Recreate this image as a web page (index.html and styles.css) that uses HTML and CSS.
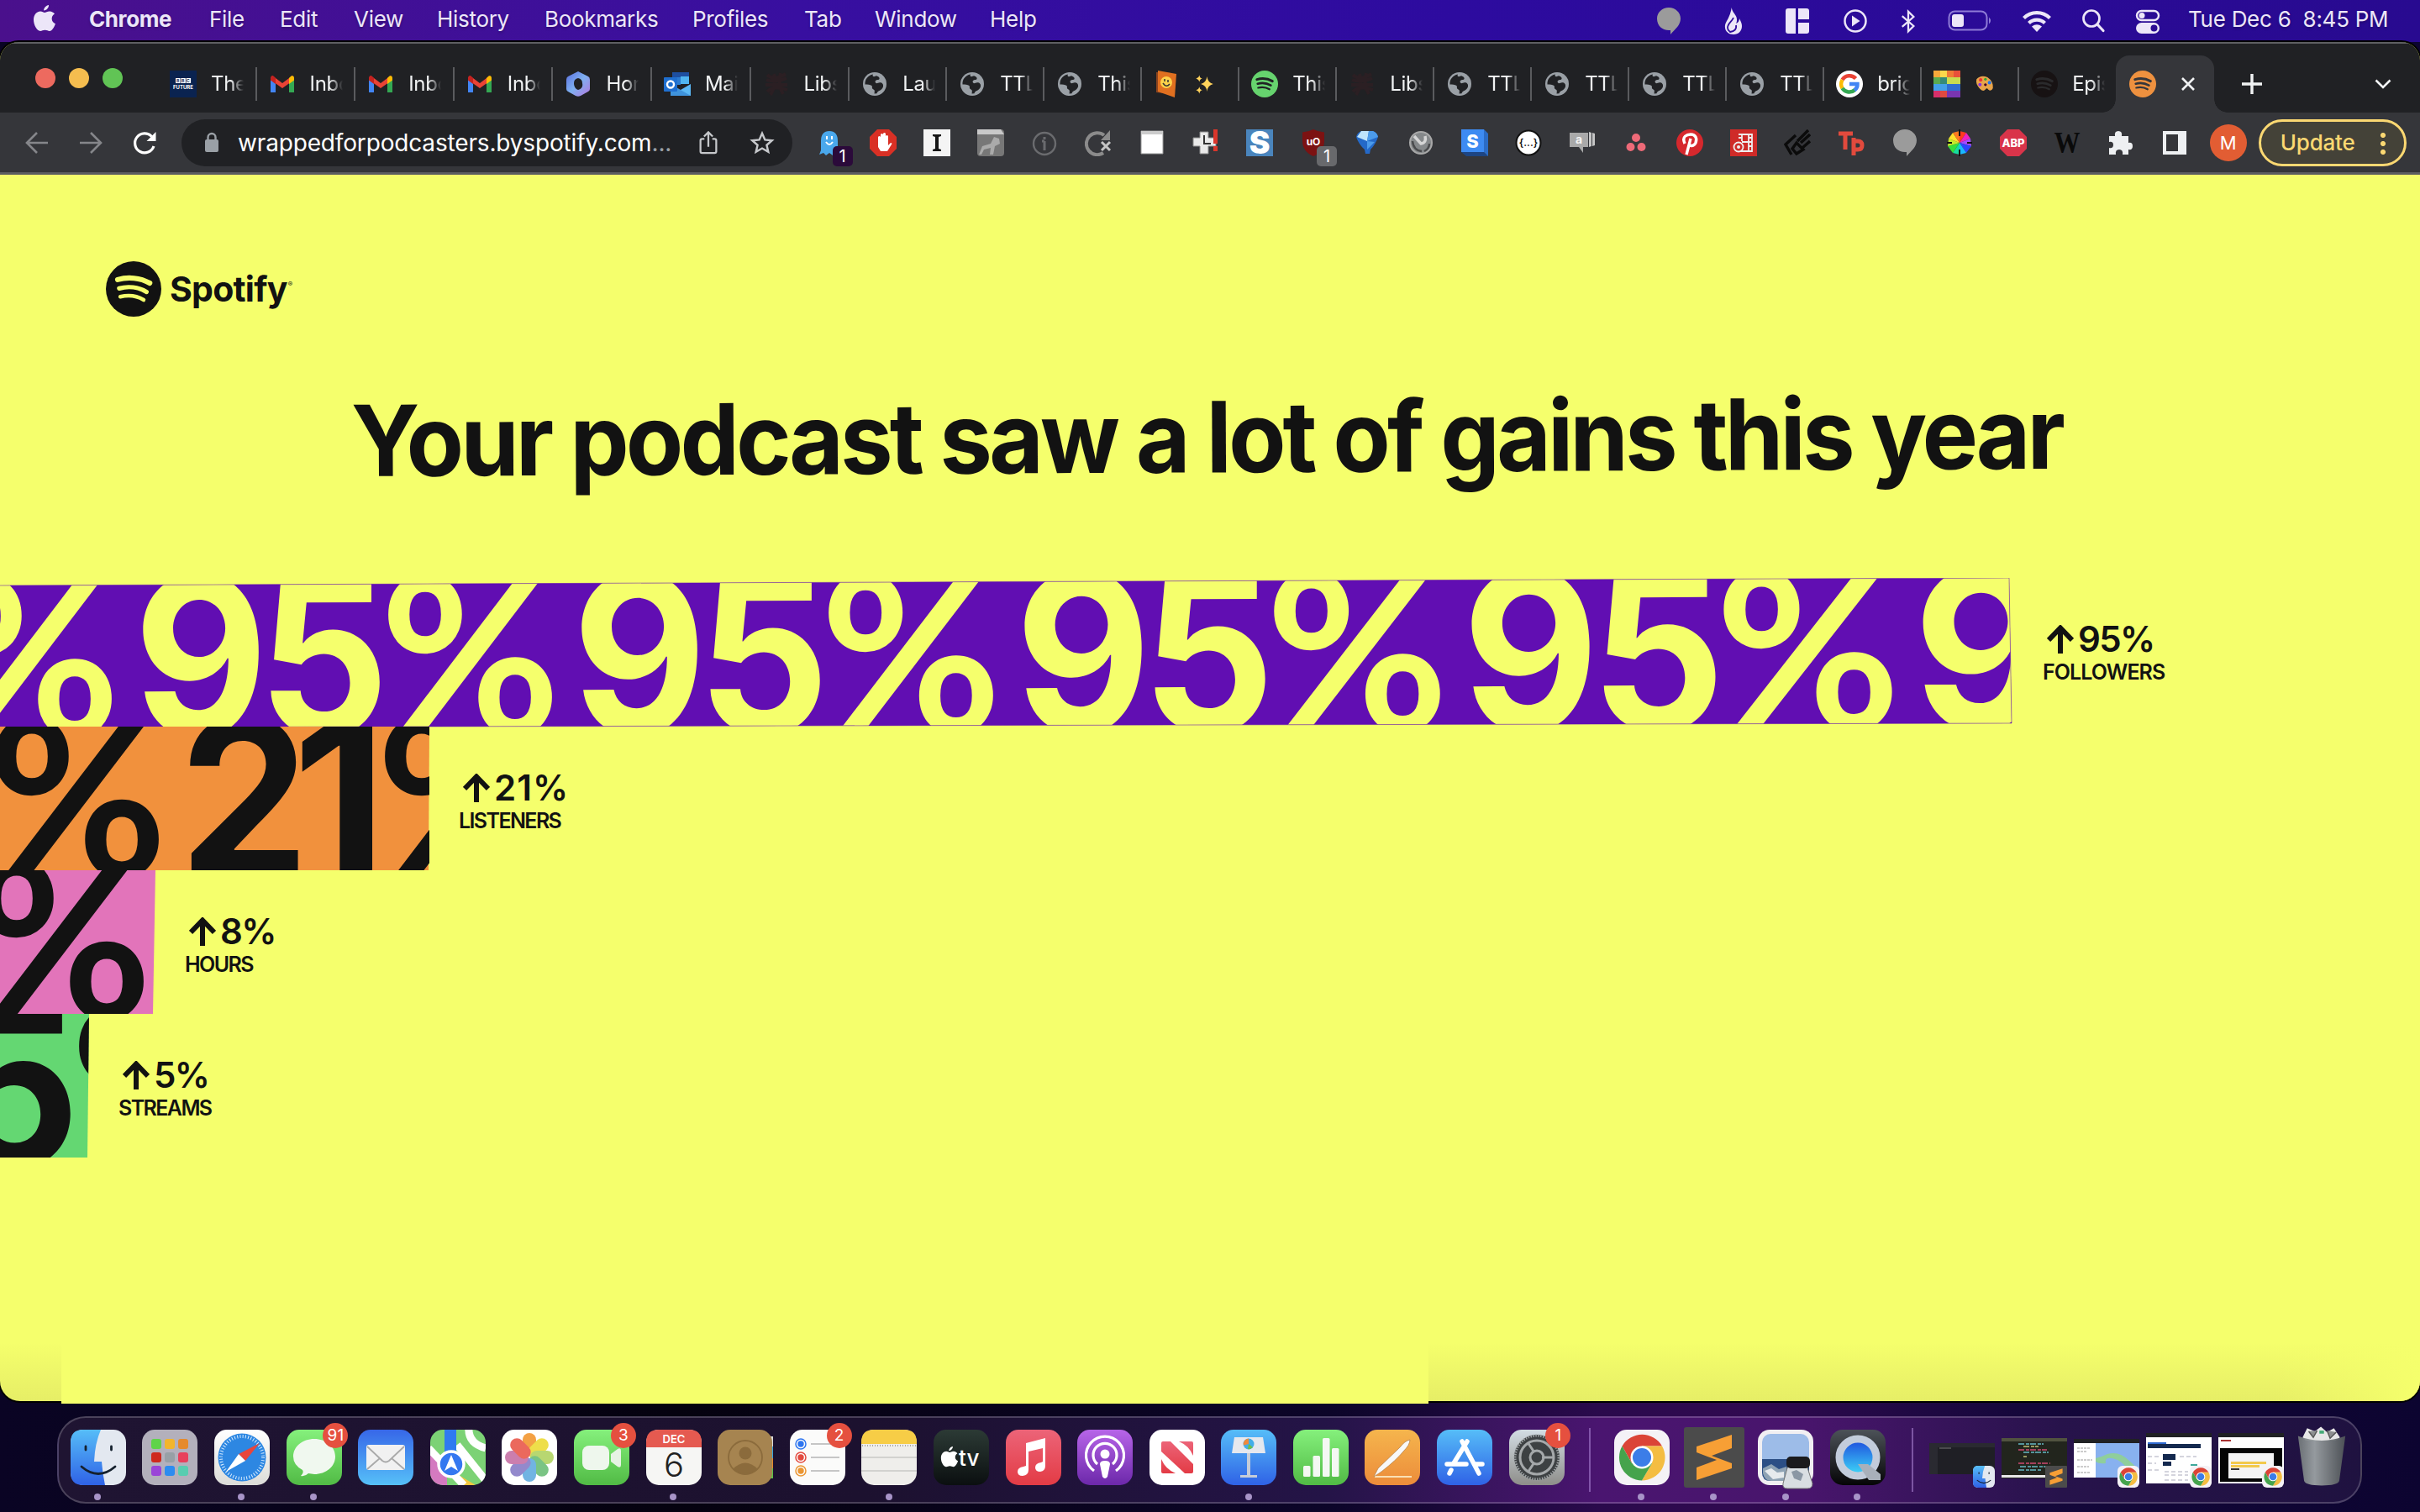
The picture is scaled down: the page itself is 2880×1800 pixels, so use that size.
FILE: index.html
```html
<!DOCTYPE html>
<html lang="en">
<head>
<meta charset="utf-8">
<title>Wrapped for Podcasters</title>
<link rel="stylesheet" href="styles.css">
</head>
<body>
<svg class="sprite" width="0" height="0" aria-hidden="true">
<defs>
<linearGradient id="gBlue" x2="0" y2="1"><stop stop-color="#3767e8"/><stop offset="1" stop-color="#56c0f8"/></linearGradient>
<linearGradient id="gBlue2" x2="0" y2="1"><stop stop-color="#56bdf8"/><stop offset="1" stop-color="#2f62e6"/></linearGradient>
<linearGradient id="gGreen" x2="0" y2="1"><stop stop-color="#85f07c"/><stop offset="1" stop-color="#51bb45"/></linearGradient>
<linearGradient id="gWhite" x2="0" y2="1"><stop stop-color="#fff"/><stop offset="1" stop-color="#dcdcd8"/></linearGradient>
<linearGradient id="gPurple" x2="0" y2="1"><stop stop-color="#b765e8"/><stop offset="1" stop-color="#6c28aa"/></linearGradient>
<linearGradient id="gRed" x2="0" y2="1"><stop stop-color="#ec6478"/><stop offset="1" stop-color="#e33b45"/></linearGradient>
<linearGradient id="gOrange" x2="0" y2="1"><stop stop-color="#f5b54d"/><stop offset="1" stop-color="#ec8c3a"/></linearGradient>
<linearGradient id="gTv" x2="0" y2="1"><stop stop-color="#2c3a35"/><stop offset="1" stop-color="#0b0f10"/></linearGradient>
<linearGradient id="gGray" x2="0" y2="1"><stop stop-color="#d3dde4"/><stop offset="1" stop-color="#8e8e8a"/></linearGradient>
<linearGradient id="gDark" x2="0" y2="1"><stop stop-color="#4c5258"/><stop offset="1" stop-color="#050506"/></linearGradient>
<linearGradient id="gBin" x2="1"><stop stop-color="#6e7477"/><stop offset=".35" stop-color="#9ba1a3"/><stop offset="1" stop-color="#4f5457"/></linearGradient>
<linearGradient id="gHex" x2="1" y2="1"><stop stop-color="#5a6fe0"/><stop offset=".5" stop-color="#7fb0f0"/><stop offset="1" stop-color="#b478e0"/></linearGradient>
<linearGradient id="gQt" x2="0" y2="1"><stop stop-color="#1d49dd"/><stop offset="1" stop-color="#3fdcf8"/></linearGradient>

<symbol id="apple" viewBox="0 0 28 32"><path fill="currentColor" d="M19 0c.3 3-2.600 6.500-5.800 6.400C12.900 3.500 16 .3 19 0zM14 9c1.500 0 3.300-1.700 6.300-1.600 2.200.1 4.400 1.200 5.700 3.200-5 3-4.100 9.700.9 11.600C25.700 26 22.900 30.900 20 31c-2 0-2.900-1.200-5.500-1.200S11 31 9 31C5 31 1 23.700 1 17.600 1 11 5.300 7.500 9 7.500c2.200 0 4 1.500 5 1.500z"/></symbol>
<symbol id="spot" viewBox="0 0 32 32"><circle cx="16" cy="16" r="16" fill="currentColor"/><g fill="none" stroke="var(--cut,#202124)" stroke-linecap="round"><path stroke-width="3" d="M6.800 10.600c6-1.700 13-1.100 18.500 2"/><path stroke-width="2.600" d="M7.700 15.700c5-1.400 11-.8 15.700 2"/><path stroke-width="2.200" d="M8.300 20.500c4.500-1.100 9.500-.6 13.500 1.800"/></g></symbol>
<symbol id="globe" viewBox="0 0 32 32"><circle cx="16" cy="16" r="14" fill="#9aa0a6"/><path fill="#202124" d="M14 4.500c-6 1-10 6-9.500 12 3 0 6 0 8 1.500 1 2-.5 3 2 4.500 1.500.5 1.500 2 1 5l3-.2c1-4 6-3 7.500-8 .5-3-1-5-4-5l-4 1c-2-1-2-3 0-4l3-.5c2-2-1-4-3-4.500l-3 1c-2-.5-1.500-2-1-2.800z"/></symbol>
<symbol id="gmail" viewBox="0 0 32 32"><path fill="#4285f4" d="M2 8v18h6V13z"/><path fill="#34a853" d="M30 8v18h-6V13z"/><path fill="#ea4335" d="M4 6l12 9 12-9 2 5-14 10L2 11z"/><path fill="#fbbc04" d="M24 9l2.500-2.500Q30 5 30 9.500v2l-6 4.400z"/><path fill="#c5221f" d="M8 9L5.500 6.500Q2 5 2 9.500v2l6 4.400z"/></symbol>
<symbol id="bbc" viewBox="0 0 32 32"><path fill="#0a2350" d="M0 0h32v32H0z"/><g font-family="Inter" font-weight="700" text-anchor="middle"><path fill="#fff" d="M7 9h5.500v6H7zM13.300 9h5.500v6h-5.500zM19.600 9h5.500v6h-5.500z"/><text x="17.200" y="14" font-size="5" fill="#0a2350" letter-spacing="2.700">BBC</text><text x="16" y="21.500" font-size="6" fill="#fff">FUTURE</text></g></symbol>
<symbol id="m365" viewBox="0 0 32 32"><path fill="url(#gHex)" fill-rule="evenodd" d="M16 1l12 6q2 1 2 4v11q0 2-2 3l-9 5q-3 1.500-6 0l-9-5q-2-1-2-3V11q0-3 2-4zM16 9q-5 1-5 6c0 4 2 7 5 8 4-1 6-4 5-8q0-5-5-6z"/></symbol>
<symbol id="outlook" viewBox="0 0 32 32"><path fill="#1e4fa0" d="M10 2h20v14H10z"/><path fill="#50b5f0" d="M20 7h10v9H20z"/><path fill="#2b7bd0" d="M10 8h10v9H10z"/><path fill="#5bb8f5" d="M8 30h24V16z"/><path fill="#3f93dc" d="M8 16v14h24z"/><rect y="8" width="16" height="17" rx="1" fill="#1f6fd0"/><circle cx="8" cy="16.500" r="4" fill="none" stroke="#fff" stroke-width="2.400"/></symbol>
<symbol id="blot" viewBox="0 0 32 32"><path fill="none" stroke="#2b1f23" stroke-width="4" d="M5 5q8 8 22-1M4 11q10 4 24-2M3 17h26M5 25q8-8 24-2M13 4q4 12-4 25M21 3q-4 14 3 25"/></symbol>
<symbol id="book" viewBox="0 0 32 32"><path fill="#8a4420" d="M3 2l18 1v25L3 26z"/><path fill="#e07020" d="M5 0l22 4-2 28-20-7z"/><circle cx="15" cy="14" r="7" fill="#ffd24a"/><path stroke="#333" stroke-width="1.500" fill="none" d="M11 15q4 6 8 1M13 10v3m4-2v3"/></symbol>
<symbol id="sparkles" viewBox="0 0 32 32"><path fill="#ffd35c" d="M19 5q1 9 9 11-8 2-9 11-1-9-9-11 8-2 9-11zM8 3q0 4 4 5-4 1-4 5-1-4-5-5 4-1 5-5zM8 20q0 4 4 5-4 1-4 5-1-4-5-5 4-1 5-5z"/></symbol>
<symbol id="google" viewBox="0 0 32 32"><circle cx="16" cy="16" r="16" fill="#fff"/><g fill="none" stroke-width="4.500"><path stroke="#ea4335" d="M7.500 11A10 10 0 0 1 23.500 9.500"/><path stroke="#fbbc04" d="M7.500 21A10 10 0 0 1 7.500 11"/><path stroke="#34a853" d="M7.500 21A10 10 0 0 0 22.500 23"/><path stroke="#4285f4" d="M16 16h9.500a9 9 0 0 1-3.500 7.500"/></g></symbol>
<symbol id="mosaic" viewBox="0 0 32 32"><path fill="#f7a83b" d="M0 0h8v8H0z"/><path fill="#fbd84c" d="M8 0h8v8H8z"/><path fill="#ef7a35" d="M16 0h8v8h-8z"/><path fill="#e8503a" d="M24 0h8v8h-8z"/><path fill="#5aaa50" d="M0 8h8v8H0z"/><path fill="#368a78" d="M8 8h8v8H8z"/><path fill="#c8dc50" d="M16 8h16v8H16z"/><path fill="#43a0e8" d="M0 16h16v8H0z"/><path fill="#2f6ed0" d="M16 16h16v8H16z"/><path fill="#d62f6a" d="M0 24h8v8H0z"/><path fill="#e04a40" d="M8 24h8v8H8z"/><path fill="#7a35b0" d="M16 24h16v8H16z"/></symbol>
<symbol id="palette" viewBox="0 0 32 32"><path fill="#e8a44a" d="M4 9Q10 2 20 6q9 6 8 16-3 6-7 2-2-3-4 0-3 4-8-1Q2 16 4 9z"/><circle cx="10" cy="10" r="2.500" fill="#e33"/><circle cx="17" cy="9" r="2" fill="#3a3"/><circle cx="9" cy="17" r="2.500" fill="#83d"/><circle cx="23" cy="14" r="2.500" fill="#27e"/><circle cx="17" cy="17" r="2" fill="#402"/></symbol>

<symbol id="bubble" viewBox="0 0 32 32"><path fill="#9b9b9b" d="M16 0c8 0 14 6 14 13 0 8-6 12-12 19v-5C9 28 2 22 2 13 2 6 8 0 16 0z"/></symbol>
<symbol id="flame" viewBox="0 0 32 32"><path fill="currentColor" d="M15-1c-1 6 6 9 6 15 0 2 0 3-1 5 3-1 4-4 4-6 2 4 3 6 3 9 0 6-4 10-10 10S6 28 7 21c.5-4 6-9 8-22z"/><path fill="none" stroke="#2e0b9c" stroke-width="1.800" d="M17 12c-2 5-7 7-7 12 0 3 2 4 3 5 5-1 8-3 7-8"/></symbol>
<symbol id="layout" viewBox="0 0 32 32"><path fill="currentColor" d="M5 1h9v30H5q-3 0-3-3V4q0-3 3-3zM17 1h10q3 0 3 3v10H17zM17 18h13v10q0 3-3 3H17z"/></symbol>
<symbol id="play" viewBox="0 0 32 32"><circle cx="16" cy="16" r="12.500" fill="none" stroke="currentColor" stroke-width="2.500"/><path fill="currentColor" d="M12 9.500v13l9.500-6.500z"/></symbol>
<symbol id="bt" viewBox="0 0 32 32"><path fill="none" stroke="currentColor" stroke-width="2.500" d="M8 9l15 13-7 7V3l7 7L8 23"/></symbol>
<symbol id="battery" viewBox="0 0 54 28"><rect x="1.500" y="2.500" width="45" height="22" rx="7" fill="none" stroke="#8e7bd6" stroke-width="2"/><rect x="5" y="6" width="14" height="15" rx="3" fill="currentColor"/><path fill="#8e7bd6" d="M49 9.500q4 4 0 8z"/></symbol>
<symbol id="wifi" viewBox="0 0 36 28"><g fill="none" stroke="currentColor" stroke-width="4.200"><path d="M2.500 10.500a22 22 0 0 1 31 0M8.500 16.500a13.500 13.500 0 0 1 19 0"/></g><path fill="currentColor" d="M18 27l-6-6.500q6-4.500 12 0z"/></symbol>
<symbol id="search" viewBox="0 0 32 32"><circle cx="14" cy="13" r="9.500" fill="none" stroke="currentColor" stroke-width="2.700"/><path stroke="currentColor" stroke-width="3.200" stroke-linecap="round" d="M21 20l7 7.500"/></symbol>
<symbol id="control" viewBox="0 0 32 32"><rect x="3" y="4" width="26" height="11" rx="5.500" fill="none" stroke="currentColor" stroke-width="2.400"/><circle cx="9" cy="9.500" r="3.500" fill="currentColor"/><rect x="2" y="18" width="28" height="13" rx="6.500" fill="currentColor"/><circle cx="23.500" cy="24.500" r="4" fill="#2a0a93"/></symbol>

<symbol id="back" viewBox="0 0 32 32"><path fill="none" stroke="currentColor" stroke-width="2.600" d="M29 16H4M16 4L4 16l12 12"/></symbol>
<symbol id="fwd" viewBox="0 0 32 32"><path fill="none" stroke="currentColor" stroke-width="2.600" d="M3 16h25M16 4l12 12-12 12"/></symbol>
<symbol id="reload" viewBox="0 0 32 32"><path fill="none" stroke="currentColor" stroke-width="3.200" d="M27 20a11.500 11.500 0 1 1-2.500-11.500"/><path fill="currentColor" d="M29.500 3v11H18.500z"/></symbol>
<symbol id="lock" viewBox="0 0 20 26"><rect x="2" y="9" width="16" height="15" rx="2" fill="#9aa0a6"/><path fill="none" stroke="#9aa0a6" stroke-width="2.400" d="M5.500 10V6.500a4.500 4.500 0 0 1 9 0V10"/></symbol>
<symbol id="share" viewBox="0 0 32 32"><g fill="none" stroke="currentColor" stroke-width="2.400"><path d="M11 11H8q-2 0-2 2v14q0 2 2 2h16q2 0 2-2V13q0-2-2-2h-3M16 21V3M10.500 8L16 2.500 21.500 8"/></g></symbol>
<symbol id="star" viewBox="0 0 32 32"><path fill="none" stroke="currentColor" stroke-width="2.600" d="M16 4l3.600 8.200 8.900.8-6.700 5.900 2 8.700L16 23l-7.800 4.600 2-8.700L3.500 13l8.900-.8z"/></symbol>

<symbol id="x1" viewBox="0 0 32 32"><path fill="#4aa8ec" d="M16 2q10 0 10 12v12l2 4-5-2-3 3-4-3-4 3-3-3-5 2 2-5V14Q6 2 16 2z"/><path fill="none" stroke="#fff" stroke-width="2" d="M12 15q4 6 8 0M13 8v4m6-4v4"/></symbol>
<symbol id="x2" viewBox="0 0 32 32"><path fill="#d93025" d="M9 0h14l9 9v14l-9 9H9l-9-9V9z"/><path fill="#fff" d="M10 17V9q1.500-2 3 0v5-8q1.500-2 3 0v8-9q1.500-2 3 0v10-7q1.500-2 3 0v11l3-3q2 0 1 2l-5 8h-8l-3-5z"/></symbol>
<symbol id="x3" viewBox="0 0 32 32"><path fill="#f4f4f4" d="M0 0h32v32H0z"/><path fill="#161616" d="M11 6h10v2l-3 1v14l3 1v2H11v-2l3-1V9l-3-1z"/></symbol>
<symbol id="x4" viewBox="0 0 32 32"><rect width="32" height="32" rx="4" fill="#777"/><path fill="#c9c9c9" d="M0 0h28l4 6H0z"/><path fill="#aaa" d="M20 9l6 2 1 6-6 3-2 10h-4l1-8-8 2-3 6H2l4-10 10-3z"/></symbol>
<symbol id="x5" viewBox="0 0 32 32"><circle cx="16" cy="17" r="13" fill="none" stroke="#6a6b6e" stroke-width="2.400"/><path stroke="#6a6b6e" stroke-width="3" d="M16 14v11m0-16v3m-3 2h3"/></symbol>
<symbol id="x6" viewBox="0 0 32 32"><path fill="none" stroke="#8b8b8b" stroke-width="4" d="M23 7a13 13 0 1 0-1 21"/><path fill="#8b8b8b" d="M30 1v12H19z"/><path stroke="#c4c4c4" stroke-width="3" d="M20 15l10 10m0-10L20 25"/></symbol>
<symbol id="x7" viewBox="0 0 32 32"><path fill="#fff" stroke="#999" d="M3 2h26v27H3z"/><path fill="#ccc" d="M3 2h26v4H3z"/></symbol>
<symbol id="x8" viewBox="0 0 32 32"><path fill="#e9e9e9" stroke="#888" d="M9 3h10v7h9v10h-9v9H9v-9H1V10h8z"/><path fill="none" stroke="#333" stroke-width="2" d="M14 7v10h8"/><path stroke="#d9362b" stroke-width="5" d="M27.500 0v17m0 3v6"/></symbol>
<symbol id="x9" viewBox="0 0 32 32"><path fill="#4a85bd" d="M0 0h32v32H0z"/><text x="16" y="29" font-family="Inter" font-weight="900" font-size="37" text-anchor="middle" fill="#fff">S</text></symbol>
<symbol id="x10" viewBox="0 0 32 32"><path fill="#7c1212" d="M16 0q6 3 13 3.500V14q0 12-13 18Q3 26 3 14V3.500Q10 3 16 0z"/><text x="16" y="19" font-family="Inter" font-weight="700" font-size="12" text-anchor="middle" fill="#fff">uO</text></symbol>
<symbol id="x11" viewBox="0 0 32 32"><path fill="#2469c8" d="M9 2h14q5 2 6 7-3 9-9 15l-1 5h-5l-1-5Q6 18 3 9q1-5 6-7z"/><path fill="#bfe4fb" d="M9 2h9l-2 12L4 9z"/><path fill="#4c9bea" d="M18 2h5q5 2 6 7l-13 5zM16 14l9 1-9 9z"/></symbol>
<symbol id="x12" viewBox="0 0 32 32"><circle cx="16" cy="16" r="13" fill="#85888a" stroke="#a8a8a8" stroke-width="2"/><path fill="none" stroke="#d5d5d5" stroke-width="3.500" d="M8 8l8 9q7-1 5-9"/><path fill="none" stroke="#4a4b4d" stroke-width="2.500" d="M6 14q1 11 11 12M20 26q6-3 6-9"/></symbol>
<symbol id="x13" viewBox="0 0 32 32"><path fill="#1d4583" d="M0 27h27l5 5H6z"/><path fill="#2b6cc6" d="M27 0l5 5v27l-5-5z"/><path fill="#3d8bf2" d="M0 0h27v27H0z"/><text x="13.500" y="21.500" font-family="Inter" font-weight="800" font-size="22" text-anchor="middle" fill="#fff">S</text></symbol>
<symbol id="x14" viewBox="0 0 32 32"><circle cx="16" cy="16" r="14.500" fill="#fff" stroke="#111" stroke-width="2"/><text x="16" y="20" font-family="Inter" font-weight="600" font-size="12" text-anchor="middle" fill="#111">{...}</text></symbol>
<symbol id="x15" viewBox="0 0 32 32"><path fill="#a9a9a9" d="M1 4h22v17h-6v7l-5-7H1z"/><path fill="#c6c6c6" d="M24 3l3 1v16l-3 1zM28 4l3 1v14l-3 1z"/><text x="12" y="17" font-family="Inter" font-weight="700" font-size="14" text-anchor="middle" fill="#f4f4f4">a</text></symbol>
<symbol id="x16" viewBox="0 0 32 32"><g fill="#ee6a78"><circle cx="16" cy="10" r="5"/><circle cx="9.500" cy="21" r="5"/><circle cx="22.500" cy="21" r="5"/></g></symbol>
<symbol id="x17" viewBox="0 0 32 32"><circle cx="16" cy="16" r="16" fill="#d6282d"/><path fill="none" stroke="#fff" stroke-width="3.400" d="M10 17c-4-9 3-11 7-11 6 0 8 5 6 10-2 4-7 5-8 1M17 11l-5 19"/></symbol>
<symbol id="x18" viewBox="0 0 32 32"><path fill="#cf2b28" d="M0 0h32v32H0z"/><g fill="none" stroke="#eee" stroke-width="1.800"><path d="M10 6h16v20H12M14 6v8m8-8v20M10 10h4m8 0h4m-4 5h4m-4 5h4m-12-5h8"/><circle cx="10" cy="21" r="5.500"/></g><circle cx="10" cy="21" r="2" fill="#eee"/></symbol>
<symbol id="x19" viewBox="0 0 32 32"><g fill="none" stroke="#0b0b0b" stroke-width="3.400"><path d="M14 7L2 18l7 12M10 23l5-7 8 8-8 5zM16 14L29 1M20 16L31 6M22 22l9-8"/></g></symbol>
<symbol id="x20" viewBox="0 0 32 32"><path fill="none" stroke="#e24a3d" stroke-width="5" d="M1 5h17M9 3v21M19 10v21M19 14h5q5 0 5 5t-5 5h-5"/></symbol>
<symbol id="x22" viewBox="0 0 32 32"><path fill="#ff3b1f" d="M16 16V2l8 2z"/><path fill="#ee22c0" d="M16 16l8-12 5 7z"/><path fill="#a24aff" d="M16 16l13-5 1 9z"/><path fill="#2b45ff" d="M16 16l14 4-6 8z"/><path fill="#19b8ff" d="M16 16l8 12-8 2z"/><path fill="#17dca0" d="M16 16v14l-8-2z"/><path fill="#35e03a" d="M16 16L8 28l-6-8z"/><path fill="#c6ec2a" d="M16 16L2 20l1-9z"/><path fill="#ffe02b" d="M16 16L3 11l5-7z"/><path fill="#ff7a1f" d="M16 16L8 4l8-2z"/><path stroke="#111" stroke-width="2" d="M16 0v8m0 16v8M1 16h6m18 0h6"/></symbol>
<symbol id="x23" viewBox="0 0 32 32"><path fill="#d9344a" d="M9 0h14l9 9v14l-9 9H9l-9-9V9z"/><text x="16" y="20.500" font-family="Inter" font-weight="800" font-size="13" text-anchor="middle" fill="#fff">ABP</text></symbol>
<symbol id="x24" viewBox="0 0 32 32"><text x="16" y="28" font-family="Liberation Serif" font-weight="700" font-size="36" text-anchor="middle" textLength="31" lengthAdjust="spacingAndGlyphs" fill="#0a0a0a">W</text></symbol>
<symbol id="x25" viewBox="0 0 32 32"><path fill="#eef0f2" d="M2 8h7q-1-6 4-6t4 6h8v8q5-1 5 4t-5 4v6h-7q1-6-4-6t-4 6H2v-8q5 1 5-3.500T2 15z"/></symbol>
<symbol id="x26" viewBox="0 0 32 32"><path fill="#eef0f2" d="M2 2h28v28H2zm4 4v20h14V6z" fill-rule="evenodd"/></symbol>

<symbol id="finder" viewBox="0 0 66 66"><rect width="66" height="66" rx="15" fill="#e3e8f0"/><path fill="url(#gBlue2)" d="M15 0h21q-7 16-8 38h9q1 14 4 28H15Q0 66 0 51V15Q0 0 15 0z"/><g fill="none" stroke="#15212e" stroke-width="2.800" stroke-linecap="round"><path d="M18 20v4M48.500 20v4M13 44q20 17 40 0"/></g></symbol>
<symbol id="launch" viewBox="0 0 66 66"><rect width="66" height="66" rx="15" fill="#b3b0bc"/><g><rect x="11" y="11" width="12" height="12" rx="3" fill="#5fd44a"/><rect x="27" y="11" width="12" height="12" rx="3" fill="#f2b52c"/><rect x="43" y="11" width="12" height="12" rx="3" fill="#e58a2c"/><rect x="11" y="27" width="12" height="12" rx="3" fill="#cf2a1e"/><rect x="27" y="27" width="12" height="12" rx="3" fill="#98a0a6"/><rect x="43" y="27" width="12" height="12" rx="3" fill="#e8415c"/><rect x="11" y="43" width="12" height="12" rx="3" fill="#9a45d8"/><rect x="27" y="43" width="12" height="12" rx="3" fill="#2d8cf0"/><rect x="43" y="43" width="12" height="12" rx="3" fill="#58cdb0"/></g></symbol>
<symbol id="safari" viewBox="0 0 66 66"><rect width="66" height="66" rx="15" fill="url(#gWhite)"/><circle cx="33" cy="33" r="28.500" fill="#2d87e2"/><circle cx="33" cy="33" r="25" fill="none" stroke="#d8ecff" stroke-width="4" stroke-dasharray="1 2.270"/><path fill="#e8453c" d="M54 16L29 29l8 8z"/><path fill="#fff" d="M14 50l15-21 8 8z"/></symbol>
<symbol id="messages" viewBox="0 0 66 66"><rect width="66" height="66" rx="15" fill="url(#gGreen)"/><path fill="#f0f8ef" d="M33 11c14 0 25 9 25 21S47 53 33 53l-7-1q-4 4-9 3 4-4 2-7Q8 42 8 32c0-12 11-21 25-21z"/></symbol>
<symbol id="mail" viewBox="0 0 66 66"><rect width="66" height="66" rx="15" fill="url(#gBlue)"/><rect x="10" y="18" width="46" height="30" rx="3" fill="#f1f1f1"/><path fill="none" stroke="#a9a9a9" stroke-width="1.800" d="M11 20l18 17q4 3 8 0l18-17M11 47l15-13m29 13L40 34"/></symbol>
<symbol id="maps" viewBox="0 0 66 66"><clipPath id="cr"><rect width="66" height="66" rx="15"/></clipPath><g clip-path="url(#cr)"><path fill="#7cd275" d="M0 0h66v66H0z"/><path fill="#d47ac0" d="M0 26l20 22v18H0z"/><path fill="#f3c63e" d="M34 66V54l20 12z"/><path fill="none" stroke="#fff" stroke-width="9" d="M-2 22l42 44M32 18l40 50M66 22Q44 16 46-4"/><path fill="#2f7af0" d="M17 0h14v30H17z"/><circle cx="25" cy="41" r="15" fill="#3478f0" stroke="#fff" stroke-width="3.500"/><path fill="#fff" d="M25 30l8 19-8-5-8 5z"/></g></symbol>
<symbol id="photos" viewBox="0 0 66 66"><rect width="66" height="66" rx="15" fill="#fff"/><g opacity=".92"><rect x="25" y="4" width="16" height="28" rx="8" fill="#f29a36"/><rect x="25" y="4" width="16" height="28" rx="8" fill="#eddc3b" transform="rotate(45 33 33)"/><rect x="25" y="4" width="16" height="28" rx="8" fill="#b3d465" transform="rotate(90 33 33)"/><rect x="25" y="4" width="16" height="28" rx="8" fill="#6fbf7a" transform="rotate(135 33 33)"/><rect x="25" y="4" width="16" height="28" rx="8" fill="#66aee0" transform="rotate(180 33 33)"/><rect x="25" y="4" width="16" height="28" rx="8" fill="#8a80c8" transform="rotate(225 33 33)"/><rect x="25" y="4" width="16" height="28" rx="8" fill="#c774a8" transform="rotate(270 33 33)"/><rect x="25" y="4" width="16" height="28" rx="8" fill="#ea5d50" transform="rotate(315 33 33)"/></g></symbol>
<symbol id="facetime" viewBox="0 0 66 66"><rect width="66" height="66" rx="15" fill="url(#gGreen)"/><rect x="10" y="19" width="32" height="29" rx="8" fill="#eef7ed"/><path fill="#e6f3e4" d="M44 29l8-6q4-2 4 2v17q0 4-4 2l-8-6z"/></symbol>
<symbol id="calendar" viewBox="0 0 66 66"><rect width="66" height="66" rx="15" fill="#f6f6f4"/><path fill="#e55a50" d="M15 0h36q15 0 15 15v6H0v-6Q0 0 15 0z"/><g font-family="Inter" text-anchor="middle"><text x="33" y="15.500" font-size="13" font-weight="600" fill="#fff">DEC</text><text x="33" y="56" font-size="40" font-weight="300" fill="#222">6</text></g></symbol>
<symbol id="contacts" viewBox="0 0 66 66"><path fill="#ddd" d="M58 8h8v12h-8z"/><path fill="#3ba7e0" d="M58 20h10v14H58z"/><path fill="#e58a2c" d="M58 34h10v12H58z"/><path fill="#5fc04a" d="M58 46h10v12H58z"/><rect width="65" height="66" rx="15" fill="#a68450"/><g fill="#8b6b3c"><circle cx="33" cy="28" r="7.500"/><path d="M18 47q15-15 30 0-15 13-30 0z"/></g><circle cx="33" cy="33" r="20" fill="none" stroke="#8b6b3c" stroke-width="1.800"/></symbol>
<symbol id="reminders" viewBox="0 0 66 66"><rect width="66" height="66" rx="15" fill="#fbfbfa"/><path stroke="#b5b5b5" stroke-width="1.600" d="M25 17h34M25 33h34M25 49h34"/><g fill="none" stroke-width="1.500"><circle cx="13" cy="17" r="3.700" fill="#2e75f0"/><circle cx="13" cy="17" r="6" stroke="#2e75f0"/><circle cx="13" cy="33" r="3.700" fill="#e34a3f"/><circle cx="13" cy="33" r="6" stroke="#e34a3f"/><circle cx="13" cy="49" r="3.700" fill="#eb9632"/><circle cx="13" cy="49" r="6" stroke="#eb9632"/></g></symbol>
<symbol id="notes" viewBox="0 0 66 66"><rect width="66" height="66" rx="15" fill="#efeeeb"/><path fill="#f7cd46" d="M15 0h36q15 0 15 15v2H0v-2Q0 0 15 0z"/><path stroke="#c9c9c6" stroke-width="1.300" d="M0 33h66M0 49h66"/><path stroke="#aaa" stroke-width="2" stroke-dasharray="1 2" d="M1 19h64"/></symbol>
<symbol id="tv" viewBox="0 0 66 66"><rect width="66" height="66" rx="15" fill="url(#gTv)"/><use href="#apple" x="8" y="20" width="22" height="25" color="#fff"/><text x="30" y="43" font-family="Inter" font-size="26" font-weight="500" fill="#fff">tv</text></symbol>
<symbol id="music" viewBox="0 0 66 66"><rect width="66" height="66" rx="15" fill="url(#gRed)"/><path fill="#fff" d="M24 16l23-6v33q0 6-6 7-6 0-6-5t7-6l2-1V22l-17 4v22q0 6-7 7-6 0-6-5t7-6l3-1z"/></symbol>
<symbol id="podcasts" viewBox="0 0 66 66"><rect width="66" height="66" rx="15" fill="url(#gPurple)"/><g fill="none" stroke="#fff" stroke-width="3.200"><path d="M20 49A22.500 22.500 0 1 1 46 49"/><path d="M24 41a14 14 0 1 1 18 0"/></g><circle cx="33" cy="29" r="5.500" fill="#fff"/><path fill="#fff" d="M27 41q0-4 6-4t6 4l-3 15q-3 4-6 0z"/></symbol>
<symbol id="news" viewBox="0 0 66 66"><rect width="66" height="66" rx="15" fill="#fff"/><g fill="url(#gRed)"><path d="M14 16q0-2 2-2h9l27 27v9q0 2-2 2h-8L14 26z"/><path d="M35 14h15q2 0 2 2v15q-5-12-17-17zM14 35v15q0 2 2 2h15Q19 47 14 35z"/></g></symbol>
<symbol id="keynote" viewBox="0 0 66 66"><rect width="66" height="66" rx="15" fill="url(#gBlue2)"/><path fill="#e5e8ee" d="M16 9h34l3 19H13z"/><path fill="#c5ccd8" d="M31 28h4v26h-4zM23 54h20v3H23z"/><circle cx="33" cy="17" r="6.500" fill="#43aee8"/><path fill="#ef8a3c" d="M33 17v-6.500a6.500 6.500 0 0 0-6 8z"/><path fill="#6cc04a" d="M33 17l5 4a6.500 6.500 0 0 1-6 2z"/></symbol>
<symbol id="numbers" viewBox="0 0 66 66"><rect width="66" height="66" rx="15" fill="url(#gGreen)"/><g fill="#f4f8f3"><rect x="12" y="43" width="8.500" height="13" rx="1.500"/><rect x="23.500" y="31" width="8.500" height="25" rx="1.500"/><rect x="35" y="10" width="8.500" height="46" rx="1.500"/><rect x="46" y="22" width="8.500" height="34" rx="1.500"/></g></symbol>
<symbol id="pages" viewBox="0 0 66 66"><rect width="66" height="66" rx="15" fill="url(#gOrange)"/><path stroke="#fbe0b4" stroke-width="2" d="M12 56h44"/><path fill="#f8f8f8" stroke="#b9854c" stroke-width=".8" d="M54 12q-6 1-12 9L16 46l-5 10 9-6q18-14 26-24 8-8 8-14z"/></symbol>
<symbol id="appstore" viewBox="0 0 66 66"><rect width="66" height="66" rx="15" fill="url(#gBlue2)"/><path stroke="#fff" stroke-width="5.500" stroke-linecap="round" d="M30 14l20 38M36 14L20 40M17 48l-2 4M12 41h23M46 41h8"/></symbol>
<symbol id="settings" viewBox="0 0 66 66"><rect width="66" height="66" rx="15" fill="url(#gGray)"/><circle cx="33" cy="33" r="27" fill="#3d4143"/><circle cx="33" cy="33" r="26" fill="none" stroke="#9da2a4" stroke-width="3" stroke-dasharray="1.500 1.500"/><g fill="none" stroke="#a4a8aa" stroke-width="3"><circle cx="33" cy="33" r="20"/><circle cx="33" cy="33" r="8"/><path d="M39 33h14M30 27l-8-12M30 39l-8 12"/></g></symbol>
<symbol id="chrome" viewBox="0 0 66 66"><rect width="66" height="66" rx="15" fill="#f4f2f6"/><path fill="#db4437" d="M9.500 19.500A27.500 27.500 0 0 1 57 19.500H33L21 40z"/><path fill="#f4bd42" d="M57 19.500A27.500 27.500 0 0 1 33 60.500L45 40 33 19.500z"/><path fill="#45a34c" d="M33 60.500A27.500 27.500 0 0 1 9.500 19.500L21 40h24z"/><circle cx="33" cy="33" r="13.500" fill="#fff"/><circle cx="33" cy="33" r="11" fill="#3c7de8"/></symbol>
<symbol id="sublime" viewBox="0 0 72 72"><rect width="72" height="72" rx="3" fill="#4b4b4b"/><path fill="#f79f35" d="M15 23L57 9v16L33 34l24 9v6L15 63V48l24-9-24-9z"/></symbol>
<symbol id="preview" viewBox="0 0 66 72"><rect width="66" height="66" rx="14" fill="#f1eff2"/><rect x="5" y="5" width="56" height="56" rx="10" fill="#9dbce8"/><path fill="#2c4f85" d="M5 35h56v16q0 10-10 10H15Q5 61 5 51z"/><path fill="#8fa3b4" d="M6 46l10-5 9 6 9-3v17H16Q8 61 6 52z"/><path fill="#e6eaed" d="M8 49l8-3 7 5 8-1v7l-13 2z"/><path fill="#d9dee2" stroke="#777" d="M36 42h22l7 22q0 6-6 6H35q-6 0-5-6z"/><path fill="#8b97a4" d="M40 50l6-2 8 5-3 8-8-3z"/><rect x="34" y="32" width="28" height="14" rx="5" fill="#1b1b1d"/></symbol>
<symbol id="quicktime" viewBox="0 0 66 66"><rect width="66" height="66" rx="15" fill="url(#gDark)"/><circle cx="33" cy="33" r="22" fill="url(#gQt)" stroke="#c2ccdb" stroke-width="9"/><path fill="#a8b0ba" d="M33 41h12l15 12v7H46z"/></symbol>
<symbol id="trash" viewBox="0 0 66 78"><path fill="#e7e7e7" d="M8 14L14 2l10 4 8-6 8 7 9-5 8 12-6 4H12z"/><path fill="#8d8f90" d="M16 6l6 8 5-9M40 5l4 10 8-8" stroke="#555" stroke-width="1.500"/><path fill="#4a7" d="M30 5h6v4h-6z"/><path fill="url(#gBin)" fill-opacity=".95" d="M2 12q31 12 62 0l-8 59q-2 6-23 6t-23-6z"/></symbol>
</defs>
</svg>

<div class="desktop">
<header class="menubar">
  <nav class="menus"><svg class="logo"><use href="#apple"/></svg><b>Chrome</b><span>File</span><span>Edit</span><span>View</span><span>History</span><span>Bookmarks</span><span>Profiles</span><span>Tab</span><span>Window</span><span>Help</span></nav>
  <div class="status"><svg><use href="#bubble"/></svg><svg><use href="#flame"/></svg><svg><use href="#layout"/></svg><svg><use href="#play"/></svg><svg><use href="#bt"/></svg><svg class="bat"><use href="#battery"/></svg><svg class="wf"><use href="#wifi"/></svg><svg><use href="#search"/></svg><svg><use href="#control"/></svg><time>Tue Dec 6&nbsp; 8:45 PM</time></div>
</header>

<section class="window">
  <div class="tabstrip">
    <div class="lights"><i class="red"></i><i class="yellow"></i><i class="green"></i></div>
    <div class="tab w"><svg><use href="#bbc"/></svg><span>The</span></div>
    <div class="tab w"><svg><use href="#gmail"/></svg><span>Inbo</span></div>
    <div class="tab w"><svg><use href="#gmail"/></svg><span>Inbo</span></div>
    <div class="tab w"><svg><use href="#gmail"/></svg><span>Inbo</span></div>
    <div class="tab w"><svg><use href="#m365"/></svg><span>Hom</span></div>
    <div class="tab w"><svg><use href="#outlook"/></svg><span>Mail</span></div>
    <div class="tab w"><svg><use href="#blot"/></svg><span>Libs</span></div>
    <div class="tab"><svg><use href="#globe"/></svg><span>Lau</span></div>
    <div class="tab"><svg><use href="#globe"/></svg><span>TTL</span></div>
    <div class="tab"><svg><use href="#globe"/></svg><span>This</span></div>
    <div class="tab"><svg><use href="#book"/></svg><svg class="emoji"><use href="#sparkles"/></svg></div>
    <div class="tab"><svg class="sp-green"><use href="#spot"/></svg><span>This</span></div>
    <div class="tab"><svg><use href="#blot"/></svg><span>Libs</span></div>
    <div class="tab"><svg><use href="#globe"/></svg><span>TTL</span></div>
    <div class="tab"><svg><use href="#globe"/></svg><span>TTL</span></div>
    <div class="tab"><svg><use href="#globe"/></svg><span>TTL</span></div>
    <div class="tab"><svg><use href="#globe"/></svg><span>TTL</span></div>
    <div class="tab"><svg><use href="#google"/></svg><span>brig</span></div>
    <div class="tab"><svg><use href="#mosaic"/></svg><svg class="emoji"><use href="#palette"/></svg></div>
    <div class="tab last"><svg class="sp-black"><use href="#spot"/></svg><span>Epis</span></div>
    <div class="tab active"><svg class="sp-orange"><use href="#spot"/></svg><svg class="close" viewBox="0 0 16 16"><path d="M1 1l14 14M15 1L1 15"/></svg></div>
    <svg class="plus" viewBox="0 0 24 24"><path d="M12 0v24M0 12h24"/></svg>
    <svg class="chev" viewBox="0 0 20 12"><path d="M1.500 1.500L10 10l8.500-8.500"/></svg>
  </div>

  <div class="toolbar">
    <svg class="nav dim"><use href="#back"/></svg><svg class="nav dim"><use href="#fwd"/></svg><svg class="nav"><use href="#reload"/></svg>
    <div class="omnibox"><svg class="lock"><use href="#lock"/></svg><span class="url">wrappedforpodcasters.byspotify.com<em>...</em></span><svg class="act"><use href="#share"/></svg><svg class="act"><use href="#star"/></svg></div>
    <div class="exts">
      <div><svg><use href="#x1"/></svg><b class="cnt plum">1</b></div><div><svg><use href="#x2"/></svg></div><div><svg><use href="#x3"/></svg></div><div><svg><use href="#x4"/></svg></div><div><svg><use href="#x5"/></svg></div><div><svg><use href="#x6"/></svg></div><div><svg><use href="#x7"/></svg></div><div><svg><use href="#x8"/></svg></div><div><svg><use href="#x9"/></svg></div><div><svg><use href="#x10"/></svg><b class="cnt">1</b></div><div><svg><use href="#x11"/></svg></div><div><svg><use href="#x12"/></svg></div><div><svg><use href="#x13"/></svg></div><div><svg><use href="#x14"/></svg></div><div><svg><use href="#x15"/></svg></div><div><svg><use href="#x16"/></svg></div><div><svg><use href="#x17"/></svg></div><div><svg><use href="#x18"/></svg></div><div><svg><use href="#x19"/></svg></div><div><svg><use href="#x20"/></svg></div><div><svg><use href="#bubble"/></svg></div><div><svg><use href="#x22"/></svg></div><div><svg><use href="#x23"/></svg></div><div><svg><use href="#x24"/></svg></div><div><svg><use href="#x25"/></svg></div><div><svg><use href="#x26"/></svg></div><div><span class="avatar">M</span></div>
    </div>
    <button class="update">Update<i></i></button>
  </div>

  <main class="page">
    <div class="brand"><svg><use href="#spot"/></svg><strong>Spotify</strong><sup>®</sup></div>
    <h1>Your podcast saw a lot of gains this year</h1>
    <div class="chart">
      <div class="row first">
        <svg class="bar" width="2396" height="180" viewBox="0 0 2396 180"><clipPath id="c1"><path d="M0 9L2391 0l3 173L0 178z"/></clipPath><path fill="#610eb2" d="M0 9L2391 0l3 173L0 178z"/>
          <g clip-path="url(#c1)"><g class="big lime" transform="translate(0 189) skewY(-.22)">
            <text class="pct" x="-72" textLength="215" lengthAdjust="spacingAndGlyphs">%</text>
            <text x="159" textLength="160" lengthAdjust="spacingAndGlyphs">9</text><text x="307" textLength="156" lengthAdjust="spacingAndGlyphs">5</text><text class="pct" x="452" textLength="215" lengthAdjust="spacingAndGlyphs">%</text>
            <text x="681" textLength="160" lengthAdjust="spacingAndGlyphs">9</text><text x="830" textLength="157" lengthAdjust="spacingAndGlyphs">5</text><text class="pct" x="976" textLength="216" lengthAdjust="spacingAndGlyphs">%</text>
            <text x="1208" textLength="162" lengthAdjust="spacingAndGlyphs">9</text><text x="1359" textLength="158" lengthAdjust="spacingAndGlyphs">5</text><text class="pct" x="1506" textLength="218" lengthAdjust="spacingAndGlyphs">%</text>
            <text x="1740" textLength="163" lengthAdjust="spacingAndGlyphs">9</text><text x="1893" textLength="160" lengthAdjust="spacingAndGlyphs">5</text><text class="pct" x="2041" textLength="221" lengthAdjust="spacingAndGlyphs">%</text>
            <text x="2277" textLength="165" lengthAdjust="spacingAndGlyphs">9</text>
          </g></g><path fill="none" stroke="#610eb2" stroke-opacity=".5" d="M0 9L2391 0l3 173L0 178"/></svg>
        <div class="stat"><p><svg viewBox="0 0 32 34"><path d="M16 34V4M2 18L16 3.500 30 18"/></svg>95%</p><small class="loose">FOLLOWERS</small></div>
      </div>
      <div class="row">
        <svg class="bar" width="511" height="171" viewBox="0 0 511 171"><path fill="#f1913d" d="M0 0h511l-1 171H0z"/><g class="big" transform="translate(0 179)"><text class="pct" x="-16" textLength="215" lengthAdjust="spacingAndGlyphs">%</text><text x="213" textLength="155" lengthAdjust="spacingAndGlyphs">2</text><text x="348" textLength="112" lengthAdjust="spacingAndGlyphs">1</text><text class="pct" x="448" textLength="215" lengthAdjust="spacingAndGlyphs">%</text></g></svg>
        <div class="stat"><p class="wide-one"><svg viewBox="0 0 32 34"><path d="M16 34V4M2 18L16 3.500 30 18"/></svg>21%</p><small>LISTENERS</small></div>
      </div>
      <div class="row">
        <svg class="bar" width="185" height="171" viewBox="0 0 185 171"><path fill="#e274ba" d="M0 0h185l-3 171H0z"/><g class="big" transform="translate(0 177)"><text class="pct" x="-34" textLength="215" lengthAdjust="spacingAndGlyphs">%</text></g></svg>
        <div class="stat"><p><svg viewBox="0 0 32 34"><path d="M16 34V4M2 18L16 3.500 30 18"/></svg>8%</p><small>HOURS</small></div>
      </div>
      <div class="row">
        <svg class="bar" width="106" height="171" viewBox="0 0 106 171"><clipPath id="c4"><path d="M0 0h106l-2 171H0z"/></clipPath><path fill="#64d772" d="M0 0h106l-2 171H0z"/><g clip-path="url(#c4)"><g class="big" transform="translate(0 182)"><text x="-62" textLength="157" lengthAdjust="spacingAndGlyphs">5</text><text class="pct" x="84" textLength="215" lengthAdjust="spacingAndGlyphs">%</text></g></g></svg>
        <div class="stat"><p><svg viewBox="0 0 32 34"><path d="M16 34V4M2 18L16 3.500 30 18"/></svg>5%</p><small>STREAMS</small></div>
      </div>
    </div>
  </main>
</section>
<div class="patch"></div>

<footer class="dock">
  <div class="app run"><svg><use href="#finder"/></svg></div>
  <div class="app"><svg><use href="#launch"/></svg></div>
  <div class="app run"><svg><use href="#safari"/></svg></div>
  <div class="app run"><svg><use href="#messages"/></svg><b>91</b></div>
  <div class="app"><svg><use href="#mail"/></svg></div>
  <div class="app"><svg><use href="#maps"/></svg></div>
  <div class="app"><svg><use href="#photos"/></svg></div>
  <div class="app"><svg><use href="#facetime"/></svg><b>3</b></div>
  <div class="app run"><svg><use href="#calendar"/></svg></div>
  <div class="app"><svg><use href="#contacts"/></svg></div>
  <div class="app"><svg><use href="#reminders"/></svg><b>2</b></div>
  <div class="app run"><svg><use href="#notes"/></svg></div>
  <div class="app"><svg><use href="#tv"/></svg></div>
  <div class="app"><svg><use href="#music"/></svg></div>
  <div class="app"><svg><use href="#podcasts"/></svg></div>
  <div class="app"><svg><use href="#news"/></svg></div>
  <div class="app run"><svg><use href="#keynote"/></svg></div>
  <div class="app"><svg><use href="#numbers"/></svg></div>
  <div class="app"><svg><use href="#pages"/></svg></div>
  <div class="app"><svg><use href="#appstore"/></svg></div>
  <div class="app"><svg><use href="#settings"/></svg><b>1</b></div>
  <i class="sep"></i>
  <div class="app run"><svg><use href="#chrome"/></svg></div>
  <div class="app run"><svg class="wide"><use href="#sublime"/></svg></div>
  <div class="app run"><svg class="tall"><use href="#preview"/></svg></div>
  <div class="app run"><svg><use href="#quicktime"/></svg></div>
  <i class="sep"></i>
  <div class="thumb"><svg viewBox="0 0 78 62"><path fill="#1f1f25" d="M0 14h78v37H0z"/><path fill="#2a2a31" d="M0 14h78v5H0zM0 14h10v37H0z"/><path stroke="#777" d="M12 20h14"/></svg><svg class="mini"><use href="#finder"/></svg></div>
  <div class="thumb"><svg viewBox="0 0 78 62"><path fill="#22251d" d="M0 8h78v48H0z"/><path fill="#51533f" d="M0 8h78v4H0z"/><path fill="#e8e8e8" d="M0 52h56v3H0z"/><g fill="none" stroke-width="1.300" stroke-dasharray="7 2 4 1"><path stroke="#65b8c4" d="M20 15h30M26 25h30M22 42h36M20 46h28"/><path stroke="#d04a72" d="M20 22h34M20 38h38"/><path stroke="#c0bf78" d="M26 18h18M26 30h4"/></g></svg><svg class="mini"><use href="#sublime"/></svg></div>
  <div class="thumb"><svg viewBox="0 0 78 62"><path fill="#88b1ef" d="M0 9h78v46H0z"/><path fill="#202124" d="M0 9h78v5H0z"/><path fill="#fff" d="M0 14h26v41H0z"/><path fill="#8fce9c" d="M26 32q8-2 14-5 14-4 26 8 12 10 12 17h-12q-2-12-14-18-16-6-14 4-8 1-12-2z"/><path stroke="#9a9a9a" stroke-dasharray="3 1" d="M4 20h16M4 24h12M4 34h18M4 42h14M4 49h16"/></svg><svg class="mini"><use href="#chrome"/></svg></div>
  <div class="thumb"><svg viewBox="0 0 78 62"><path fill="#fff" d="M0 2h78v60H0z"/><path fill="#202124" d="M0 2h78v5H0z"/><path fill="#14294f" d="M2 15h63v5H2zM20 27h15v7H20zM20 36h10v5H20z"/><path fill="#2f6ad0" d="M2 13h22v2H2z"/><path fill="#3fa89a" d="M53 39h8v2h-8z"/><path stroke="#aab" stroke-dasharray="5 3" d="M2 30h14M2 38h10M2 46h14M22 48h28M22 52h28M22 58h28M40 30h20"/></svg><svg class="mini"><use href="#chrome"/></svg></div>
  <div class="thumb"><svg viewBox="0 0 78 62"><path fill="#fff" d="M0 2h78v60H0z"/><path fill="#202124" d="M0 2h78v5H0z"/><path fill="#050505" d="M2 20h74v40H2z"/><path fill="#f4f4f4" d="M12 26h54v30H12z"/><path fill="#f2c94c" d="M15 36h42v3H15zM15 40h34v3H15z"/><path fill="#333" d="M15 44h10v2H15z"/><path stroke="#a33" stroke-width="2" d="M3 11h12"/></svg><svg class="mini"><use href="#chrome"/></svg></div>
  <svg class="bin"><use href="#trash"/></svg>
</footer>
</div>
</body>
</html>
```
FILE: styles.css
```css
* { box-sizing: border-box; }
body { margin: 0; font-family: Inter, "Liberation Sans", sans-serif; }
.sprite { position: absolute; }
svg { display: block; flex: none; }
.desktop {
  width: 2880px; height: 1800px; overflow: hidden; display: flex; flex-direction: column; position: relative;
  background: linear-gradient(90deg, #0a0424 0, #05020f 28%, #0c0529 55%, #2a0a4c 66%, #300a50 72%, #14073a 84%, #0c0430 100%);
}

/* Menu bar */
.menubar { height: 50px; flex: none; display: flex; justify-content: space-between; color: #ece6f8; font-size: 26px; background: linear-gradient(90deg, #4a108c 0, #380fa0 33%, #2d0b9f 60%, #280a90 100%); text-shadow: 0 2px 3px rgba(0,0,0,.25); }
.menus { display: grid; grid-template-columns: 67px 143px 84px 88px 99px 128px 176px 133px 84px 137px 80px; padding-left: 39px; letter-spacing: -.3px; line-height: 46px; }
.menus span, .menus b { white-space: nowrap; }
.menus b { font-weight: 700; letter-spacing: -.4px; }
.logo { width: 28px; height: 32px; margin-top: 6px; }
.status { display: flex; align-items: center; padding-right: 37px; }
.status svg { width: 32px; height: 32px; margin-right: 44px; }
.status svg:nth-child(2) { margin-right: 45px; }
.status svg:nth-child(3) { margin-right: 37px; }
.status svg:nth-child(4) { margin-right: 31px; }
.status svg:nth-child(5) { margin-right: 31px; height: 29px; }
.status .bat { width: 54px; height: 28px; margin-right: 34px; }
.status .wf { width: 36px; height: 28px; margin-right: 33px; }
.status svg:nth-child(8) { margin-right: 33px; }
.status svg:nth-child(9) { margin-right: 32px; }
.status time { width: 239px; white-space: nowrap; letter-spacing: -.27px; line-height: 46px; height: 50px; }

/* Browser window */
.window { width: 2880px; height: 1618px; flex: none; border-radius: 22px 22px 24px 24px; overflow: hidden; display: flex; flex-direction: column; background: #f5ff6c; box-shadow: 0 0 0 2px #000; }
.tabstrip { height: 84px; flex: none; background: #202124; border-top: 2px solid #5e5f62; display: flex; align-items: center; padding-top: 14px; }
.lights { width: 188px; padding-left: 42px; display: flex; gap: 16px; margin-top: -15px; flex: none; }
.lights i { width: 24px; height: 24px; border-radius: 50%; }
.red { background: #ed6a5f; } .yellow { background: #f5bd4f; } .green { background: #61c455; }
.tab { width: 116px; height: 40px; flex: none; border-right: 2px solid #5a5b5e; display: flex; align-items: center; padding-left: 14px; }
.tab.w { width: 117.600px; }
.tab svg { width: 32px; height: 32px; }
.tab span { margin-left: 17px; width: 39px; overflow: hidden; white-space: nowrap; font-size: 24px; color: #f1f3f4; letter-spacing: -.3px; line-height: 36px; -webkit-mask-image: linear-gradient(90deg, #000 60%, transparent 100%); }
.tab .emoji { width: 26px; height: 26px; margin-left: 16px; }
.tab.last { border: 0; width: 115px; }
.sp-green { color: #66d36e; } .sp-black { color: #171213; --cut: #2a2a2c; } .sp-orange { color: #ee913f; --cut: #35363a; }
.tab.active { width: 117px; height: 68px; align-self: flex-end; background: #35363a; border: 0; border-radius: 16px 16px 0 0; padding-left: 16px; position: relative; }
.tab.active::before, .tab.active::after { content: ""; position: absolute; bottom: 0; width: 16px; height: 16px; }
.tab.active::before { left: -16px; background: radial-gradient(circle at 0 0, transparent 15.500px, #35363a 16px); }
.tab.active::after { right: -16px; background: radial-gradient(circle at 100% 0, transparent 15.500px, #35363a 16px); }
.tab .close { width: 16px; height: 16px; margin-left: 30px; }
.close path, .plus path, .chev path { fill: none; stroke: #f1f3f4; stroke-width: 2.600; }
.plus { width: 24px; height: 24px; margin-left: 33px; }
.plus path { stroke-width: 3.400; }
.chev { width: 20px; height: 12px; margin-left: 134px; }
.toolbar { height: 74px; flex: none; background: #35363a; border-bottom: 3px solid #5c5d60; display: flex; align-items: center; }
.nav { width: 32px; height: 32px; margin-left: 28px; margin-right: 4px; color: #fff; }
.nav + .nav { margin-left: 28px; }
.dim { color: #85868a; }
.omnibox { width: 727px; height: 56px; margin-left: 24px; border-radius: 28px; background: #202124; display: flex; align-items: center; padding-left: 26px; flex: none; }
.lock { width: 20px; height: 26px; }
.url { color: #fff; font-size: 28px; letter-spacing: -.16px; margin-left: 21px; width: 545px; flex: none; white-space: nowrap; line-height: 56px; }
.url em { color: #9aa0a6; font-style: normal; }
.act { width: 30px; height: 30px; color: #c6c8cb; }
.act + .act { margin-left: 34px; }
.exts { display: flex; margin-left: 11.500px; }
.exts div { width: 64.050px; height: 56px; display: grid; place-items: center; position: relative; }
.exts svg { width: 32px; height: 32px; }
.cnt { position: absolute; right: 4px; bottom: 0; width: 24px; height: 24px; border-radius: 5px; background: #68696c; color: #fff; font-size: 20px; font-weight: 400; line-height: 25px; text-align: center; }
.plum { background: #2b0a3a; }
.avatar { width: 44px; height: 44px; border-radius: 50%; background: #e25d33; color: #fff; font-size: 22px; line-height: 44px; text-align: center; }
.update { width: 176px; height: 56px; margin-left: 4px; border: 3px solid #fbd872; border-radius: 28px; background: #444238; color: #fbd872; font: 500 26px/50px Inter, sans-serif; display: flex; align-items: center; padding: 0 0 0 23px; letter-spacing: -.2px; }
.update i { width: 6px; height: 28px; margin-left: 30px; background: radial-gradient(circle, #fbd872 2.700px, transparent 3.300px) 0 0 / 6px 10px; }

/* Wrapped page */
.page { flex: 1; min-height: 0; display: flex; flex-direction: column; color: #121212; background: linear-gradient(90deg, transparent 94%, #f5ff6c 100%), linear-gradient(180deg, transparent 1390px, rgba(120,110,60,.12) 1462px); }
.brand { display: flex; align-items: center; margin: 103px 0 0 126px; height: 66px; --cut: #f5ff6c; }
.brand svg { width: 66px; height: 66px; }
.brand strong { font-size: 41px; font-weight: 650; letter-spacing: -.750px; margin-left: 10px; line-height: 66px; }
.brand sup { font-size: 8px; margin: -12px 0 0 1px; }
h1 { font-size: 117px; font-weight: 660; letter-spacing: -3.980px; line-height: 140px; white-space: nowrap; margin: 78px 0 0 418px; width: 2040px; transform: rotate(-.26deg) scaleX(.954); transform-origin: 0 50%; }
.chart { margin-top: 93px; display: flex; flex-direction: column; }
.row { display: flex; height: 171px; gap: 35px; }
.row.first { height: 177px; }
.bar { overflow: hidden; }
.big { font: 680 262px Inter, sans-serif; fill: #121212; }
.big .pct { font: 700 262px Lato, sans-serif; }
.lime { fill: #f5ff6c; }
.stat { padding-top: 51px; }
.stat p { margin: 0; display: flex; align-items: center; gap: 5px; padding-left: 5px; font-size: 42px; font-weight: 640; line-height: 44px; letter-spacing: -1.600px; }
.stat .wide-one { letter-spacing: 1px; }
.stat p svg { width: 32px; height: 34px; }
.stat p path { fill: none; stroke: #121212; stroke-width: 6; }
.stat small { display: block; font-size: 25px; font-weight: 620; line-height: 30px; letter-spacing: -1.600px; margin-top: 2px; }
.stat .loose { letter-spacing: -.9px; }
.patch { position: absolute; left: 73px; top: 1560px; width: 1627px; height: 111px; background: #f5ff6c; }

/* Dock */
.dock { position: absolute; left: 68px; top: 1686px; width: 2743px; height: 104px; border: 2px solid rgba(255,255,255,.2); border-radius: 34px; display: flex; align-items: flex-start; padding: 14px 0 0 4px; background: linear-gradient(90deg, #1f1432 0, #1c112f 35%, #241447 55%, #4a1570 67%, #48156c 76%, #27134b 87%, #1f1240 100%); }
.app { width: 85.600px; height: 84px; position: relative; display: flex; justify-content: center; flex: none; }
.app svg { width: 66px; height: 66px; overflow: visible; }
.app .wide { width: 72px; height: 72px; margin-top: -3px; }
.app .tall { height: 72px; }
.app b { position: absolute; right: 2px; top: -8px; min-width: 30px; height: 30px; border-radius: 15px; background: #e5503f; color: #fff; font-size: 19px; font-weight: 400; line-height: 30px; text-align: center; }
.app.run::after { content: ""; position: absolute; left: 38px; top: 76px; width: 8px; height: 8px; border-radius: 50%; background: #a894c8; }
.sep { width: 2px; height: 76px; margin: -2px 18px 0 20px; background: rgba(190,150,230,.5); flex: none; }
.sep ~ .sep { margin-left: 21px; margin-right: 19px; }
.thumb { width: 78px; height: 84px; margin-right: 8px; position: relative; flex: none; padding-top: 2px; }
.thumb > svg:first-child { width: 78px; height: 62px; }
.thumb .mini { position: absolute; right: 0; bottom: 15px; width: 26px; height: 26px; }
.bin { width: 60px; height: 76px; margin: -6px 0 0 7px; }
```
